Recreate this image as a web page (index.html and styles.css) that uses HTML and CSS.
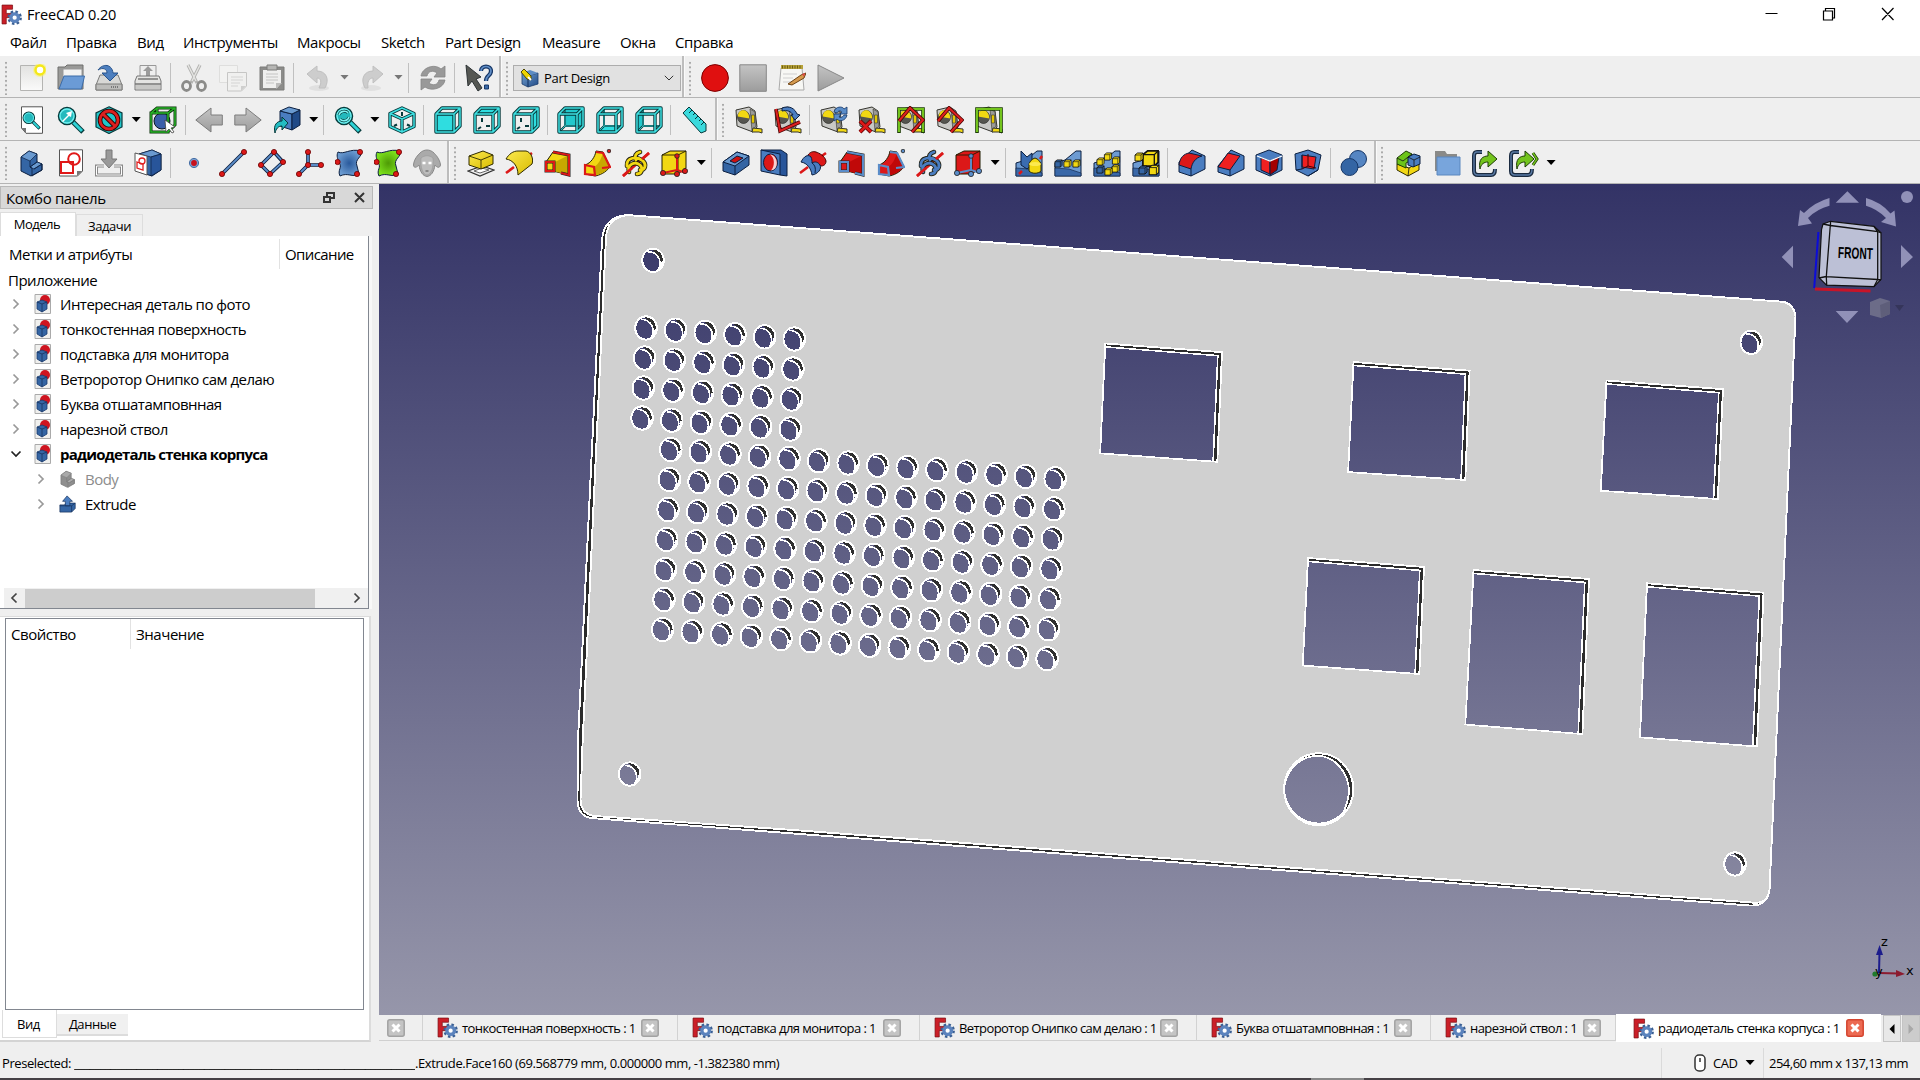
FILE: index.html
```html
<!DOCTYPE html>
<html lang="ru">
<head>
<meta charset="utf-8">
<title>FreeCAD 0.20</title>
<link rel="stylesheet" href="styles.css">
</head>
<body>
<svg class="defs" aria-hidden="true">
<defs>
<linearGradient id="gBlue" x1="0" y1="0" x2="1" y2="1"><stop offset="0" stop-color="#729fcf"/><stop offset="1" stop-color="#204a87"/></linearGradient>
<linearGradient id="gGrey" x1="0" y1="0" x2="0" y2="1"><stop offset="0" stop-color="#c4c4c4"/><stop offset="1" stop-color="#9c9c9c"/></linearGradient>
<linearGradient id="gPaper" x1="0" y1="0" x2="0" y2="1"><stop offset="0" stop-color="#e2e2e0"/><stop offset="1" stop-color="#fafafa"/></linearGradient>
<linearGradient id="gYel" x1="0" y1="0" x2="1" y2="1"><stop offset="0" stop-color="#fce94f"/><stop offset="1" stop-color="#d8bc00"/></linearGradient>
<radialGradient id="gSpot"><stop offset="0" stop-color="#2a5a9c"/><stop offset="1" stop-color="#6a9ad0"/></radialGradient>
<radialGradient id="gSpotG"><stop offset="0" stop-color="#4e9a06"/><stop offset="1" stop-color="#7be01c"/></radialGradient>

<symbol id="logo" viewBox="0 0 20 20"><path d="M1 1h10v4H5v4h5v4H5v6H1z" fill="#cb1f28" stroke="#7a1016" stroke-width=".7"/><circle cx="13" cy="13" r="5.600" fill="none" stroke="#3a5f93" stroke-width="2.600" stroke-dasharray="2.300 2.100"/><circle cx="13" cy="13" r="3.600" fill="#fff" stroke="#5b83bd" stroke-width="3.200"/></symbol>
<symbol id="new" viewBox="0 0 28 28"><path d="M2.500 1.500h22v25h-22z" fill="url(#gPaper)" stroke="#b4b4b2"/><circle cx="22" cy="6" r="7" fill="#fbf26a" opacity=".55"/><circle cx="22" cy="6" r="4.500" fill="#fff" stroke="#f4e81a" stroke-width="2.500"/></symbol>
<symbol id="open" viewBox="0 0 28 28"><path d="M1 25V3h7l2-2h16v24z" fill="#9a9a98" stroke="#6e6e6c"/><path d="M6 14V5h19v9z" fill="#f3f3f2" stroke="#999"/><path d="M2 25 7 12h20.500l-3 13z" fill="#6b9bd6" stroke="#3d6ca8"/></symbol>
<symbol id="save" viewBox="0 0 28 28"><path d="M5 11h18l4 10v5H1v-5z" fill="#d8d8d6" stroke="#7c7c7a"/><path d="M1 20h26v6H1z" fill="#bcbcba" stroke="#7c7c7a"/><path d="M16 23h8" stroke="#777" stroke-dasharray="1 1" stroke-width="2"/><path d="M3 6C8-1 17 0 18 9h5l-8 8-8-8h5c0-4-4-6-9-3z" fill="#4d7fbf" stroke="#27538c"/></symbol>
<symbol id="print" viewBox="0 0 28 28"><path d="M6 1.500h16V14H6z" fill="#eee" stroke="#999"/><path d="m14 2-5 5h3v5h4V7h3z" fill="#9b9b9b"/><path d="M3 12h22l2 5v9H1v-9z" fill="#e4e4e2" stroke="#777"/><path d="M4 15h20M1 20h26" stroke="#777" stroke-width="1.500"/><path d="M2 21h24v4H2z" fill="#c8c8c6"/></symbol>
<symbol id="cut" viewBox="0 0 28 28"><path d="m8 1 9 18M20 1l-9 18" stroke="#b2b2b0" stroke-width="3.200"/><path d="m8 1 8 16M20 1l-8 16" stroke="#e4e4e2" stroke-width="1.400"/><ellipse cx="6.500" cy="22" rx="4" ry="4.500" fill="none" stroke="#8b8b89" stroke-width="2.800"/><ellipse cx="21.500" cy="22" rx="4" ry="4.500" fill="none" stroke="#8b8b89" stroke-width="2.800"/></symbol>
<symbol id="copy" viewBox="0 0 28 28"><path d="M.5 1.500h18v17H.5z" fill="#f2f2f1" stroke="#dededd"/><path d="M8.500 8.500h19V22l-5 5h-14z" fill="#f0f0ef" stroke="#c6c6c5"/><path d="M12 13h12M12 16h12M12 19h9M12 22h7" stroke="#d4d4d3"/><path d="M22 27v-5h5z" fill="#cfcfce"/></symbol>
<symbol id="paste" viewBox="0 0 28 28"><path d="M2 3h24v23H2z" fill="#8c8c8a" stroke="#7d7d7b"/><path d="M5 6h18v13l-4 5H5z" fill="#efefee"/><path d="M9 1h10v5H9z" fill="#b6b6b4" stroke="#7d7d7b"/><path d="M8 10h12M8 13h12M8 16h12M8 19h8" stroke="#c4c4c3"/><path d="M18 25v-6h6z" fill="#bdbdbc"/></symbol>
<symbol id="undo" viewBox="0 0 28 28"><ellipse cx="15" cy="24" rx="10" ry="3" fill="#e0e0e0"/><path d="M3 10 13 2v5c9 0 13 8 8 17h-6c3-6 2-10-2-10v5z" fill="#cdcdcd" stroke="#c0c0c0"/></symbol>
<symbol id="redo" viewBox="0 0 28 28"><ellipse cx="13" cy="24" rx="10" ry="3" fill="#e0e0e0"/><path d="M25 10 15 2v5C6 7 2 15 7 24h3c-1-6 1-10 5-10v5z" fill="#cdcdcd" stroke="#c0c0c0"/></symbol>
<symbol id="refresh" viewBox="0 0 28 28"><path d="M2 12C3 4 15-1 22 5l4-3v11H15l3-4C14 6 9 7 8 12zM26 16c-1 8-13 12-20 7l-4 3V15h11l-3 4c4 3 9 2 10-3z" fill="#999" stroke="#868686" stroke-width=".8"/></symbol>
<symbol id="whats" viewBox="0 0 28 28"><path d="m1 1 15 12-5 2 6 9-4 3-6-10-4 5z" fill="#555753" stroke="#2e3436"/><path d="M16 7c0-6 10-6 10 0 0 5-5 4-5 10" fill="none" stroke="#173767" stroke-width="4.200"/><path d="M16 7c0-6 10-6 10 0 0 5-5 4-5 10" fill="none" stroke="#5f8dc6" stroke-width="1.700"/><path d="M19.500 21h4v4h-4z" fill="#3b6aa8" stroke="#173767"/></symbol>
<symbol id="wb" viewBox="0 0 20 20"><path d="m3 5 6 3v11l-6-3zM9 8l10-3v11L9 19z" fill="url(#gBlue)" stroke="#1c3c6c" stroke-width=".8"/><path d="m3 5 8-3 8 3-10 3z" fill="#5d8cc4"/><path d="m2 4 3-3 7 7v4l-4-1z" fill="#edd400" stroke="#504700"/><path d="m9 9 3 3" stroke="#fff" stroke-width="2"/></symbol>
<symbol id="rec" viewBox="0 0 28 28"><circle cx="14" cy="14" r="13.400" fill="#e01010" stroke="#7c0000"/></symbol>
<symbol id="stop" viewBox="0 0 28 28"><path d="M.8.8h26.500v26.500H.8z" fill="url(#gGrey)" stroke="#888"/></symbol>
<symbol id="macro" viewBox="0 0 28 28"><path d="M3 4h21l2 22H1z" fill="#f7f7f4" stroke="#aaa"/><path d="M3 1h22v4H3z" fill="#b7a23a"/><path d="M4 3h20" stroke="#6b5c12" stroke-width="3" stroke-dasharray="1 1.500"/><path d="M5 10h14M5 14h10M5 18h8" stroke="#cfcfcf"/><path d="m10 20 13-9 5-2-2 5-12 7z" fill="#d59a4e" stroke="#6d4213"/><path d="m24 10 3-1-1 4z" fill="#d44"/></symbol>
<symbol id="play" viewBox="0 0 28 28"><path d="M1 1v26l26-13z" fill="url(#gGrey)" stroke="#888"/></symbol>

<symbol id="lens" viewBox="0 0 28 28"><path d="m16 16 10 10" stroke="#063b3c" stroke-width="5"/><path d="m16 16 9 9" stroke="#2fd3d6" stroke-width="3"/><circle cx="10" cy="10" r="8.500" fill="#23b9bd" stroke="#063b3c" stroke-width="1.500"/><circle cx="10" cy="10" r="7" fill="none" stroke="#6ff0f0" stroke-width="1.300"/></symbol>
<symbol id="fitall" viewBox="0 0 28 28"><path d="M3.500.8h21v26.500H8L3.500 22z" fill="#fff" stroke="#555"/><path d="M3.500 22H8v5z" fill="#777"/><use href="#lens" x="4" y="5" width="19" height="19"/></symbol>
<symbol id="fitsel" viewBox="0 0 28 28"><use href="#lens"/><path d="m5 15 6-6-2-2 6-2-1 6-2-1-6 6z" fill="#fff"/></symbol>
<symbol id="noentry" viewBox="0 0 28 28"><path d="M14 .8 27 7v14l-13 6.500L1 21V7z" fill="#20c6ca" stroke="#07383a" stroke-width="1.200"/><circle cx="14" cy="14" r="9" fill="none" stroke="#2b0505" stroke-width="4.600"/><path d="m8 8 12 12" stroke="#2b0505" stroke-width="4.600"/><circle cx="14" cy="14" r="9" fill="none" stroke="#dc2020" stroke-width="2.800"/><path d="m8 8 12 12" stroke="#dc2020" stroke-width="2.800"/></symbol>
<symbol id="selbox" viewBox="0 0 28 28"><circle cx="13" cy="15" r="8" fill="#3a5ea8" stroke="#0b1521"/><g fill="none"><path d="M2 7h17v19H2zM2 7l6-5h18v17l-7 7M19 7l7-5M8 2v6" stroke="#0a300a" stroke-width="3"/><path d="M2 7h17v19H2zM2 7l6-5h18v17l-7 7M19 7l7-5M8 2v6" stroke="#28b428" stroke-width="1.500"/></g><path d="m16 14 10 7-4 1 3 4-2 1-3-4-3 3z" fill="#fff" stroke="#444" stroke-width=".8"/></symbol>
<symbol id="back" viewBox="0 0 28 28"><path d="M.8 14 16 2v7h11.300v10H16v7z" fill="url(#gGrey)" stroke="#7c7c7c"/></symbol>
<symbol id="fwd" viewBox="0 0 28 28"><path d="M27.200 14 12 2v7H.8v10H12v7z" fill="url(#gGrey)" stroke="#7c7c7c"/></symbol>
<symbol id="link" viewBox="0 0 28 28"><path d="m7 5 12 3v16L7 20z" fill="#4a7dc0" stroke="#0b1f40"/><path d="m19 8 8-4v15l-8 5z" fill="#204a87" stroke="#0b1f40"/><path d="m7 5 9-4 11 3-8 4z" fill="#6a9ad0" stroke="#0b1f40"/><path d="M2 27c-2-8 2-12 7-12v-4l6 6-6 7v-4c-4 0-6 3-7 7z" fill="#22bcc2" stroke="#06393b"/></symbol>
<symbol id="drawstyle" viewBox="0 0 28 28"><use href="#lens"/><path d="M5 9c1-4 7-5 9-2M15 11c-1 4-7 5-9 2" fill="none" stroke="#063b3c" stroke-width="3"/><path d="M5 9c1-4 7-5 9-2M15 11c-1 4-7 5-9 2" fill="none" stroke="#7df2f2" stroke-width="1.600"/></symbol>
<symbol id="iso" viewBox="0 0 28 28"><g fill="none" stroke-linejoin="round"><path d="M14 2 26 7.500v13L14 26 2 20.500v-13zM2 7.500 14 13l12-5.500M14 13v13" stroke="#06393b" stroke-width="3.400"/><path d="M14 2 26 7.500v13L14 26 2 20.500v-13zM2 7.500 14 13l12-5.500M14 13v13" stroke="#3fe0e2" stroke-width="1.500"/><path d="m6 20 3-1.500m13 1.500-3-1.500M14 6v4" stroke="#06393b" stroke-width="2"/></g></symbol>
<symbol id="wire" viewBox="0 0 28 28"><g fill="none" stroke-linejoin="round"><path d="M2 8h18v18H2zM2 8l6-6h18v18l-6 6M20 8l6-6" stroke="#06393b" stroke-width="3.400"/><path d="M2 8h18v18H2zM2 8l6-6h18v18l-6 6M20 8l6-6" stroke="#3fe0e2" stroke-width="1.500"/></g></symbol>
<symbol id="marks" viewBox="0 0 28 28"><path d="M9 12v4M13 20h4M5 23l3-2" stroke="#06393b" stroke-width="2"/></symbol>
<symbol id="inner" viewBox="0 0 28 28"><path d="M8 3v17h17M8 20l-5 5" fill="none" stroke="#06393b" stroke-width="2"/><path d="M8 3v17h17M8 20l-5 5" fill="none" stroke="#3fe0e2" stroke-width=".8"/></symbol>
<symbol id="vfront" viewBox="0 0 28 28"><path d="M2 8h18v18H2z" fill="#2fdde0"/><use href="#wire"/></symbol>
<symbol id="vtop" viewBox="0 0 28 28"><path d="m2 8 6-6h18l-6 6z" fill="#2fdde0"/><use href="#marks"/><use href="#wire"/></symbol>
<symbol id="vright" viewBox="0 0 28 28"><path d="m20 8 6-6v18l-6 6z" fill="#2fdde0"/><use href="#marks"/><use href="#wire"/></symbol>
<symbol id="vrear" viewBox="0 0 28 28"><path d="M8 2h18v18H8z" fill="#22c8cc"/><use href="#inner"/><use href="#wire"/></symbol>
<symbol id="vbottom" viewBox="0 0 28 28"><path d="m2 26 6-6h18l-6 6z" fill="#2fdde0"/><use href="#inner"/><use href="#wire"/></symbol>
<symbol id="vleft" viewBox="0 0 28 28"><path d="m2 8 6-6v18l-6 6z" fill="#22c8cc"/><use href="#inner"/><use href="#wire"/></symbol>
<symbol id="ruler" viewBox="0 0 28 28"><path d="m2 7 6-6 17 17v7l-5 2z" fill="#3ad9dc" stroke="#06393b"/><path d="m11 4-3 3m6 0-2 2m5 1-3 3m6 0-2 2m5 1-3 3" stroke="#06393b"/></symbol>
<symbol id="tape" viewBox="0 0 28 28"><path d="M1 4 14 1l6 4 2 16-4 5L2 20z" fill="#c9c9c6" stroke="#35352f"/><path d="M15 3 20 6l1 14-4 5z" fill="#9a9a96" stroke="#35352f" stroke-width=".6"/><ellipse cx="8.500" cy="11" rx="6" ry="6.500" fill="#55554f" stroke="#2a2a26" stroke-width=".7"/><path d="M2.800 10.500C3 2 14 2 14.300 12.500z" fill="#f2d813"/><path d="M16.500 9h3v8h-3z" fill="#e4c800" stroke="#35352f" stroke-width=".6"/><path d="m18 22 9 1v4l-3-1-7 0z" fill="#f2d813" stroke="#35352f"/></symbol>
<symbol id="tangle" viewBox="0 0 28 28"><use href="#tape"/><path d="M8 2c8-3 13 1 15 6l3 1-5 5-4-5h2C17 5 13 4 8 5z" fill="#4a7dc0" stroke="#0b1f40"/><path d="m2 3 4 22 20-9" fill="none" stroke="#470303" stroke-width="3.600"/><path d="m2 3 4 22 20-9" fill="none" stroke="#dc2020" stroke-width="2"/></symbol>
<symbol id="trefresh" viewBox="0 0 28 28"><use href="#tape"/><path d="M14 6c1-6 9-6 10-3l3-2v7h-7l2-2c-2-2-4-1-5 1zM27 9c-1 6-8 7-10 4l-3 2V8h7l-2 3c2 1 4 0 5-2z" fill="#5a8cc8" stroke="#173767" stroke-width=".8"/></symbol>
<symbol id="tclear" viewBox="0 0 28 28"><use href="#tape"/><path d="m2 15 11 11M13 15 2 26" stroke="#5a0000" stroke-width="4"/><path d="m2 15 11 11M13 15 2 26" stroke="#dc1818" stroke-width="2.500"/></symbol>
<symbol id="gframe" viewBox="0 0 28 28"><g fill="none"><path d="M2 27V3h24v24" stroke="#1d3d05" stroke-width="3.600"/><path d="M2 26V3h24v23" stroke="#73c41d" stroke-width="2"/></g></symbol>
<symbol id="rchev" viewBox="0 0 28 28"><g fill="none"><path d="M2 15 13 2l13 12-11 12" stroke="#470303" stroke-width="3.600"/><path d="M2 15 13 2l13 12-11 12" stroke="#dc2020" stroke-width="2"/></g></symbol>
<symbol id="tall" viewBox="0 0 28 28"><use href="#tape"/><use href="#gframe"/><use href="#rchev"/></symbol>
<symbol id="t3d" viewBox="0 0 28 28"><use href="#tape"/><use href="#rchev"/></symbol>
<symbol id="tdelta" viewBox="0 0 28 28"><use href="#tape"/><use href="#gframe"/></symbol>

<symbol id="body" viewBox="0 0 28 28"><path d="m3 8 8-6 8 3v8l5 2v6l-11 6-10-5z" fill="var(--a,#3465a4)" stroke="var(--k,#0b1f40)"/><path d="m3 8 9 4 7-7-8-3zM12 18l4 2 8-5-5-2z" fill="var(--b,#6a9ad0)" stroke="var(--k,#0b1f40)" stroke-width=".7"/><path d="M12 12v6l2 1v8l10-6v-6l-8 5M12 18l7-5" fill="none" stroke="var(--k,#0b1f40)" stroke-width=".8"/></symbol>
<symbol id="sketch" viewBox="0 0 28 28"><path d="M2.500.8h23V22l-5 5h-18z" fill="#fff" stroke="#555"/><path d="M20 27v-5h5.500z" fill="#777"/><path d="M4 13h12v11H4z" fill="none" stroke="#e01818" stroke-width="2"/><circle cx="17" cy="10" r="5.800" fill="none" stroke="#e01818" stroke-width="2"/></symbol>
<symbol id="mapsk" viewBox="0 0 28 28"><path d="M9 17H1.500v9h25v-9H19" fill="none" stroke="#888" stroke-width="3"/><path d="M9 17H1.500v9h25v-9H19" fill="none" stroke="#fff"/><path d="M11 1h6v9h5l-8 9-8-9h5z" fill="#999" stroke="#777"/></symbol>
<symbol id="valsk" viewBox="0 0 28 28"><path d="m5 5 13-4 9 4v16l-9 6-13-4z" fill="#3465a4" stroke="#0b1f40"/><path d="m5 5 12 3 10-3-9-4z" fill="#6a9ad0" stroke="#0b1f40" stroke-width=".7"/><path d="M17 8v19l10-6V5z" fill="#28559a" stroke="#0b1f40" stroke-width=".7"/><path d="m1 4 12 3v19L1 22z" fill="#fff" stroke="#555"/><circle cx="8" cy="12" r="3" fill="none" stroke="#e02020" stroke-width="1.300"/><path d="m3 13 6 2v6l-6-2z" fill="none" stroke="#e02020" stroke-width="1.300"/></symbol>
<symbol id="dpoint" viewBox="0 0 28 28"><circle cx="14" cy="14" r="4.600" fill="#7aa0d0" stroke="#466ea5"/><circle cx="14" cy="14" r="2.900" fill="#c8101c"/></symbol>
<symbol id="dline" viewBox="0 0 28 28"><path d="M3 25 25 3" stroke="#0b1f40" stroke-width="3.600"/><path d="M3 25 25 3" stroke="#5a8cc8" stroke-width="1.800"/><g fill="#dc1818" stroke="#6b0000" stroke-width=".8"><circle cx="3" cy="25" r="2.600"/><circle cx="25" cy="3" r="2.600"/></g></symbol>
<symbol id="dplane" viewBox="0 0 28 28"><path d="m16 3 9 10-13 12-9-9z" fill="none" stroke="#0b1f40" stroke-width="3.600"/><path d="m16 3 9 10-13 12-9-9z" fill="none" stroke="#5a8cc8" stroke-width="1.800"/><g fill="#dc1818" stroke="#6b0000" stroke-width=".8"><circle cx="16" cy="3" r="2.600"/><circle cx="25" cy="13" r="2.600"/><circle cx="12" cy="25" r="2.600"/><circle cx="3" cy="16" r="2.600"/></g></symbol>
<symbol id="dcs" viewBox="0 0 28 28"><path d="M12 3v13h13M12 16l-9 9" fill="none" stroke="#0b1f40" stroke-width="3.600"/><path d="M12 3v13h13M12 16l-9 9" fill="none" stroke="#5a8cc8" stroke-width="1.800"/><g fill="#dc1818" stroke="#6b0000" stroke-width=".8"><circle cx="12" cy="3" r="2.600"/><circle cx="12" cy="16" r="2.600"/><circle cx="25" cy="16" r="2.600"/><circle cx="3" cy="25" r="2.600"/></g></symbol>
<symbol id="blob" viewBox="0 0 28 28"><path d="M3 3c6 3 12-4 23-1 2 6-7 8-4 15l2 8c-7 4-11-2-19 2-3-6 3-9-1-13-1-4-3-7-1-11z" fill="var(--f)" stroke="#0b1f40"/><g fill="#dc1818" stroke="#6b0000" stroke-width=".8"><circle cx="25" cy="3" r="2.600"/><circle cx="2.600" cy="13" r="2.600"/><circle cx="22" cy="25" r="2.600"/></g></symbol>
<symbol id="clone" viewBox="0 0 28 28"><path d="M7 4c4-4 10-4 14 0 1 1 6 6 6.500 12-1 4-4 2-5.500 0-1 7-4 11-8 11.500C10 27 7 23 6 16c-2 2-5 4-5.500 0C1 10 5 6 7 4z" fill="#aaa" stroke="#888"/><path d="M8 9c-1 9 2 17 6 17s7-8 6-17c-4-3-8-3-12 0z" fill="#bcbcbc" stroke="#999" stroke-width=".6"/><path d="M9.500 14h3m3 0h3" stroke="#fff" stroke-width="2.500"/><path d="M12.500 22h3" stroke="#777" stroke-width="1.500"/></symbol>

<symbol id="pad" viewBox="0 0 28 28"><path d="m1 22 14-5 12 4-14 6z" fill="#eee" stroke="#333" stroke-width="1.300"/><path d="m7 22 8-3 7 2-9 3z" fill="#fff" stroke="#666"/><path d="M2 7v9l12 4 12-5V6l-10-4z" fill="url(#gYel)" stroke="#302b00"/><path d="m2 7 12 4 12-5M14 11v9" fill="none" stroke="#302b00" stroke-width=".9"/></symbol>
<symbol id="rev" viewBox="0 0 28 28"><path d="m1 24 8-6M20 9l7-5" stroke="#dc1818" stroke-width="2.600"/><path d="M1 10C4 5 8 2 13 2h8c5 1 8 8 6 13L13 26C13 17 8 11 1 10z" fill="url(#gYel)" stroke="#302b00"/></symbol>
<symbol id="loft" viewBox="0 0 28 28"><path d="M2 13 9 3l16 3v20L9 22H2z" fill="var(--f)" stroke="#201c00"/><path d="M9 14 25 6v20L9 22z" fill="var(--g)"/><path d="m9 3 16 3v20l-8-2M2 13h8v9H2z" fill="none" stroke="#222" stroke-width="3"/><path d="m9 3 16 3v20l-8-2M2 13h8v9H2z" fill="none" stroke="var(--e)" stroke-width="2"/></symbol>
<symbol id="pipe" viewBox="0 0 28 28"><path d="M2 16c6-2 10-8 11-14l7 1 7 15c-5 6-10 8-15 9L2 25z" fill="var(--f)" stroke="#201c00"/><path d="M11 18c5-3 7-8 9-14l7 14c-5 5-9 7-14 8z" fill="var(--g)"/><path d="m13 3 7 1 7 14-8 1M2 16l9 2 1 8-10-1z" fill="none" stroke="var(--e)" stroke-width="2.200"/><circle cx="26" cy="2" r="1.800" fill="var(--e)" stroke="#222" stroke-width=".8"/></symbol>
<symbol id="helix" viewBox="0 0 28 28"><path d="m1 27 26-23" stroke="#dc1818" stroke-width="2.600"/><g fill="none" stroke-linecap="round"><path d="M14 11C12 7 14 4 18 3M5 17C4 8 15 7 21 12c4 4 2 9-3 9M7 23C5 15 13 12 18 16c4 4 1 9-3 9" stroke="#222010" stroke-width="4.600"/><path d="M14 11C12 7 14 4 18 3M5 17C4 8 15 7 21 12c4 4 2 9-3 9M7 23C5 15 13 12 18 16c4 4 1 9-3 9" stroke="var(--f)" stroke-width="2.800"/></g><path d="m1 27 9-8M20 10l7-6" stroke="#dc1818" stroke-width="2.600"/></symbol>
<symbol id="prim" viewBox="0 0 28 28"><path d="m2 6 8-4h16v17l-8 6H2z" fill="var(--f)" stroke="#201c00"/><path d="M2 6h16l8-4M18 6v19" fill="none" stroke="#201c00" stroke-width=".9"/><path d="M17 7v14M17 21l9 3M17 21 3 24" stroke="var(--e)" stroke-width="2" fill="none"/><g fill="var(--e)" stroke="#222" stroke-width=".8"><circle cx="17" cy="7" r="2.300"/><circle cx="3" cy="24" r="2.600"/><circle cx="17" cy="25" r="2.600"/><circle cx="25" cy="22" r="2.600"/></g></symbol>
<symbol id="pocket" viewBox="0 0 28 28"><path d="m1 13 14-10 12 4v9L13 26 1 22z" fill="#3465a4" stroke="#0b1f40"/><path d="m1 13 14-10 12 4-14 10z" fill="#6a9ad0" stroke="#0b1f40"/><path d="m8 12 7-5 6 2-8 5z" fill="#cc1010" stroke="#0b1f40"/><path d="M13 17v9" stroke="#0b1f40"/></symbol>
<symbol id="hole" viewBox="0 0 28 28"><path d="M1 1h20l6 4v22l-7-1z" fill="#28559a" stroke="#0b1f40"/><path d="m1 1 19 4v21L1 22z" fill="#4a7dc0" stroke="#0b1f40"/><ellipse cx="10.500" cy="13.500" rx="7" ry="8.500" fill="#dc1818" stroke="#0b1f40"/><path d="M10 5.500c5 3 5 12 1 16 8 0 8-15-1-16z" fill="#fff" opacity=".8"/></symbol>
<symbol id="groove" viewBox="0 0 28 28"><path d="m1 24 8-6M20 9l7-5" stroke="#dc1818" stroke-width="2.600"/><path d="M9 6c2-3 5-4 8-3s9 4 10 9c0 4-3 5-5 5L12 14z" fill="#dc1818" stroke="#400"/><path d="M2 13c3-6 7-8 10-5 1 2 1 4 1 6 3-2 6-1 8 2 2 4-2 9-8 10-1-7-5-12-11-13z" fill="#4a7dc0" stroke="#0b1f40"/><path d="M13 14c3 2 4 5 3 10" fill="none" stroke="#0b1f40"/></symbol>
<symbol id="wedge" viewBox="0 0 28 28"><path d="M1 14 11 11 22 2h5v25H1z" fill="#6d9bd2" stroke="#0b1f40"/><path d="m1 19 14 1 12 4v3H1z" fill="#3a68a8" stroke="#0b1f40" stroke-width=".6"/></symbol>
<symbol id="cb" viewBox="0 0 10 10"><path d="m1 3 2.500-2H9v6L7 9H1z" fill="var(--f)" stroke="#111" stroke-width=".9"/><path d="M1 3h6l2-2M7 3v6" fill="none" stroke="#111" stroke-width=".7"/></symbol>
<symbol id="mirror" viewBox="0 0 28 28"><use href="#wedge"/><path d="m6 2 6 6 5-4v12l-5 4-6-4z" fill="#3a6cb0" stroke="#0b1f40"/><path d="M14 15c1-3 3-5 6-6 3 1 5 3 6 6v7c-3 3-9 3-12 0z" fill="#f2d813" stroke="#302b00"/><ellipse cx="20" cy="15" rx="6" ry="2" fill="#fce94f"/><path d="m4 25 3-3M25 10l2-3" stroke="#dc1818" stroke-width="2.500"/></symbol>
<symbol id="linpat" viewBox="0 0 28 28"><use href="#wedge"/><use href="#cb" class="b" x="0" y="10" width="9" height="9"/><use href="#cb" class="y" x="9" y="10" width="9" height="9"/><use href="#cb" class="y" x="18" y="10" width="9" height="9"/></symbol>
<symbol id="polpat" viewBox="0 0 28 28"><use href="#wedge"/><use href="#cb" class="y" x="10" y="3" width="10" height="9"/><use href="#cb" class="y" x="3" y="8" width="9" height="9"/><use href="#cb" class="y" x="18" y="7" width="10" height="9"/><use href="#cb" class="y" x="18" y="15" width="9" height="9"/><use href="#cb" class="b" x="3" y="16" width="9" height="9"/><use href="#cb" class="y" x="11" y="18" width="9" height="9"/></symbol>
<symbol id="multi" viewBox="0 0 28 28"><use href="#wedge"/><use href="#cb" class="y" x="9" y="0" width="19" height="19"/><use href="#cb" class="y" x="2" y="3" width="10" height="10"/><use href="#cb" class="y" x="16" y="15" width="12" height="12"/><use href="#cb" class="b" x="6" y="16" width="10" height="10"/></symbol>
<symbol id="fillet" viewBox="0 0 28 28"><path d="M1 13v10l12 4 14-7V7L14 1z" fill="#4a7dc0" stroke="#0b1f40"/><path d="M1 16C2 8 6 5 11 4l13 3c-7 2-10 7-11 13z" fill="#dc1818" stroke="#0b1f40"/><path d="M13 20v7" stroke="#0b1f40"/></symbol>
<symbol id="chamfer" viewBox="0 0 28 28"><path d="M1 17v6l12 4 14-7V7L14 1z" fill="#4a7dc0" stroke="#0b1f40"/><path d="M1 18 11 4l12 3-10 14z" fill="#ef2020" stroke="#0b1f40"/><path d="M13 21v6" stroke="#0b1f40"/></symbol>
<symbol id="draft" viewBox="0 0 28 28"><path d="M14 1 27 6v15l-12 6-14-6V6z" fill="#4a7dc0" stroke="#0b1f40"/><path d="m6 9 9 3v13l-9-4z" fill="#ef2020" stroke="#0b1f40"/><path d="m15 12 9-4-2 13-7 5z" fill="#a40000" stroke="#0b1f40"/><path d="m2 7 13 5 12-5" fill="none" stroke="#fff" stroke-width="1.200"/></symbol>
<symbol id="thick" viewBox="0 0 28 28"><path d="M1 5 14 1l13 5-3 15-10 6-12-6z" fill="#4a7dc0" stroke="#0b1f40"/><path d="m8 6 14 2-2 12-12-2z" fill="#ef2020" stroke="#0b1f40"/><path d="M14 5v12l8 2M14 17l-6 3" fill="none" stroke="#400"/><path d="M8 6v14l-6 1M24 21l-10 6" fill="none" stroke="#0b1f40"/></symbol>
<symbol id="bool" viewBox="0 0 28 28"><circle cx="18" cy="10" r="8.500" fill="#5585c2" stroke="#173767"/><circle cx="9.500" cy="18" r="8.500" fill="#3465a4" stroke="#173767"/></symbol>

<symbol id="part" viewBox="0 0 28 28"><path d="m3 15 12 4 10-6v8l-11 6-11-6z" fill="#f2d813" stroke="#302b00"/><path d="m3 9 9-7 6 3v6l-6 3v5l-9-4z" fill="#6cc41a" stroke="#1d3d05"/><path d="m14 8 6-3 6 2v8l-7 3-5-2z" fill="#4a7dc0" stroke="#0b1f40"/><path d="m3 9 6 3 9-7M14 8l6 3 6-3M20 11v7M15 19l-1 8" fill="none" stroke="#111" stroke-width=".8"/></symbol>
<symbol id="group" viewBox="0 0 28 28"><path d="M2 22V2h10l2 3h10v17z" fill="#8a8a88"/><path d="M4 8h23v18H4z" fill="#78a5dc" stroke="#5a87bf"/></symbol>
<symbol id="mklink" viewBox="0 0 28 28"><path d="M11 3H6Q3 3 3 7v15q0 4 4 4h13q4 0 4-6" fill="none" stroke="#1b2b40" stroke-width="4"/><path d="M11 3H6Q3 3 3 7v15q0 4 4 4h13q4 0 4-6" fill="none" stroke="#5a7ba5" stroke-width="1.400"/><path d="M9 20C7 10 12 7 17 7V2l9 8-9 8v-5c-4 0-7 2-8 7z" fill="#73c41d" stroke="#1d3d05"/></symbol>
<symbol id="mkrel" viewBox="0 0 30 28"><use href="#mklink" width="28" height="28" x="-1"/><path d="m24 4 4 6-4 6" fill="none" stroke="#1d3d05" stroke-width="3"/><path d="m24 4 4 6-4 6" fill="none" stroke="#73c41d" stroke-width="1.400"/></symbol>
<symbol id="doc" viewBox="0 0 18 20"><path d="M1 .5h15.500v19H1z" fill="#f0f0ee" stroke="#aaa"/><circle cx="11" cy="6" r="5" fill="#cf1420"/><path d="m3 8 5-2 5 2v7l-5 3-5-3z" fill="#3465a4" stroke="#1a3a6c" stroke-width=".8"/><path d="m3 8 5 2 5-2M8 10v8" fill="none" stroke="#16325e" stroke-width=".8"/></symbol>
<symbol id="extrude" viewBox="0 0 20 20"><path d="M1 11h5l2-2h10v6l-4 4H1z" fill="#3465a4" stroke="#16325e" stroke-width=".8"/><path d="m9 1 6 6h-3v5H7V7H4z" fill="#4a7dc0" stroke="#16325e" stroke-width=".8"/><path d="M1 12h13l4-3M14 12v7" fill="none" stroke="#16325e" stroke-width=".8"/></symbol>
<symbol id="x" viewBox="0 0 18 18"><rect x=".8" y=".8" width="16.400" height="16.400" rx="2" fill="var(--a)" stroke="var(--k)" stroke-width="1.500"/><path d="m5.500 5.500 7 7m0-7-7 7" stroke="#fff" stroke-width="3"/></symbol>
<symbol id="chev" viewBox="0 0 8 12"><path d="m1.500 1.500 4.500 4.500-4.500 4.500" fill="none" stroke="currentColor" stroke-width="1.700"/></symbol>
</defs>
</svg>

<div class="app">
<header class="titlebar"><svg class="logo"><use href="#logo"/></svg><span class="apptitle">FreeCAD 0.20</span>
<svg class="winbtns" viewBox="0 0 130 28" fill="none" stroke="#000" stroke-width="1.200"><path d="M.5 13.500h12M58.500 11h9v9h-9zM60.500 11V8.500h9v9.500h-2M117 8l11.500 12M128.500 8 117 20"/></svg></header>
<nav class="menubar"><span>Файл</span><span>Правка</span><span>Вид</span><span>Инструменты</span><span>Макросы</span><span>Sketch</span><span>Part Design</span><span>Measure</span><span>Окна</span><span>Справка</span></nav>

<div class="toolrow">
<div class="toolbar"><i class="grip"></i><svg class="ic"><use href="#new"/></svg><svg class="ic"><use href="#open"/></svg><svg class="ic"><use href="#save"/></svg><svg class="ic"><use href="#print"/></svg><i class="sep"></i><svg class="ic"><use href="#cut"/></svg><svg class="ic wide"><use href="#copy"/></svg><svg class="ic"><use href="#paste"/></svg><i class="sep"></i><svg class="ic"><use href="#undo"/></svg><i class="arr dim"></i><svg class="ic"><use href="#redo"/></svg><i class="arr dim"></i><i class="sep"></i><svg class="ic"><use href="#refresh"/></svg><i class="sep"></i><svg class="ic"><use href="#whats"/></svg></div>
<div class="toolbar"><i class="grip"></i><div class="combo"><svg><use href="#wb"/></svg><span>Part Design</span><svg class="down" viewBox="0 0 10 6"><path d="m.8.8 4.200 4.200L9.200.8" fill="none" stroke="#333"/></svg></div></div>
<div class="toolbar last tight"><i class="grip"></i><svg class="ic"><use href="#rec"/></svg><svg class="ic"><use href="#stop"/></svg><svg class="ic"><use href="#macro"/></svg><svg class="ic"><use href="#play"/></svg></div>
</div>
<div class="toolrow">
<div class="toolbar"><i class="grip"></i><svg class="ic"><use href="#fitall"/></svg><svg class="ic"><use href="#fitsel"/></svg><svg class="ic"><use href="#noentry"/></svg><i class="arr"></i><svg class="ic"><use href="#selbox"/></svg><i class="sep"></i><svg class="ic"><use href="#back"/></svg><svg class="ic"><use href="#fwd"/></svg><svg class="ic"><use href="#link"/></svg><i class="arr"></i><i class="sep"></i><svg class="ic"><use href="#drawstyle"/></svg><i class="arr"></i><svg class="ic"><use href="#iso"/></svg><i class="sep"></i><svg class="ic"><use href="#vfront"/></svg><svg class="ic"><use href="#vtop"/></svg><svg class="ic"><use href="#vright"/></svg><i class="sep"></i><svg class="ic"><use href="#vrear"/></svg><svg class="ic"><use href="#vbottom"/></svg><svg class="ic"><use href="#vleft"/></svg><i class="sep"></i><svg class="ic"><use href="#ruler"/></svg></div>
<div class="toolbar last"><i class="grip"></i><svg class="ic"><use href="#tape"/></svg><svg class="ic"><use href="#tangle"/></svg><i class="sep"></i><svg class="ic"><use href="#trefresh"/></svg><svg class="ic"><use href="#tclear"/></svg><svg class="ic"><use href="#tall"/></svg><svg class="ic"><use href="#t3d"/></svg><svg class="ic"><use href="#tdelta"/></svg></div>
</div>
<div class="toolrow">
<div class="toolbar"><i class="grip"></i><svg class="ic"><use href="#body"/></svg><svg class="ic"><use href="#sketch"/></svg><svg class="ic"><use href="#mapsk"/></svg><svg class="ic"><use href="#valsk"/></svg><i class="sep"></i><svg class="ic"><use href="#dpoint"/></svg><svg class="ic"><use href="#dline"/></svg><svg class="ic"><use href="#dplane"/></svg><svg class="ic"><use href="#dcs"/></svg><svg class="ic spot"><use href="#blob"/></svg><svg class="ic spotg"><use href="#blob"/></svg><svg class="ic"><use href="#clone"/></svg></div>
<div class="toolbar"><i class="grip"></i><svg class="ic"><use href="#pad"/></svg><svg class="ic"><use href="#rev"/></svg><svg class="ic add"><use href="#loft"/></svg><svg class="ic add"><use href="#pipe"/></svg><svg class="ic add"><use href="#helix"/></svg><svg class="ic add"><use href="#prim"/></svg><i class="arr"></i><i class="sep"></i><svg class="ic"><use href="#pocket"/></svg><svg class="ic"><use href="#hole"/></svg><svg class="ic"><use href="#groove"/></svg><svg class="ic sub"><use href="#loft"/></svg><svg class="ic sub"><use href="#pipe"/></svg><svg class="ic blue"><use href="#helix"/></svg><svg class="ic sub"><use href="#prim"/></svg><i class="arr"></i><i class="sep"></i><svg class="ic"><use href="#mirror"/></svg><svg class="ic"><use href="#linpat"/></svg><svg class="ic"><use href="#polpat"/></svg><svg class="ic"><use href="#multi"/></svg><i class="sep"></i><svg class="ic"><use href="#fillet"/></svg><svg class="ic"><use href="#chamfer"/></svg><svg class="ic"><use href="#draft"/></svg><svg class="ic"><use href="#thick"/></svg><i class="sep"></i><svg class="ic"><use href="#bool"/></svg></div>
<div class="toolbar last"><i class="grip"></i><svg class="ic"><use href="#part"/></svg><svg class="ic"><use href="#group"/></svg><svg class="ic"><use href="#mklink"/></svg><svg class="ic wide"><use href="#mkrel"/></svg><i class="arr"></i></div>
</div>

<main class="work">
<aside class="side">
<div class="docktitle"><span>Комбо панель</span><svg viewBox="0 0 44 16" fill="none" stroke="#333" stroke-width="2"><path d="M2 7h6v5H2zM5 6V3h7v5H9M33 3l9 9M42 3l-9 9"/></svg></div>
<div class="tabs"><span class="tab on">Модель</span><span class="tab">Задачи</span></div>
<section class="model">
<div class="treehead"><span>Метки и атрибуты</span><span>Описание</span></div>
<div class="rootrow">Приложение</div>
<ul class="tree">
<li><svg class="tw"><use href="#chev"/></svg><svg class="ti"><use href="#doc"/></svg>Интересная деталь по фото</li>
<li><svg class="tw"><use href="#chev"/></svg><svg class="ti"><use href="#doc"/></svg>тонкостенная поверхность</li>
<li><svg class="tw"><use href="#chev"/></svg><svg class="ti"><use href="#doc"/></svg>подставка для монитора</li>
<li><svg class="tw"><use href="#chev"/></svg><svg class="ti"><use href="#doc"/></svg>Ветроротор Онипко сам делаю</li>
<li><svg class="tw"><use href="#chev"/></svg><svg class="ti"><use href="#doc"/></svg>Буква отшатамповнная</li>
<li><svg class="tw"><use href="#chev"/></svg><svg class="ti"><use href="#doc"/></svg>нарезной ствол</li>
<li class="active"><svg class="tw open"><use href="#chev"/></svg><svg class="ti"><use href="#doc"/></svg><span>радиодеталь стенка корпуса</span></li>
<li class="child off"><svg class="tw"><use href="#chev"/></svg><svg class="ti"><use href="#body"/></svg>Body</li>
<li class="child"><svg class="tw"><use href="#chev"/></svg><svg class="ti"><use href="#extrude"/></svg>Extrude</li>
</ul>
<div class="hscroll"><svg class="sa left"><use href="#chev"/></svg><div class="thumb"></div><svg class="sa"><use href="#chev"/></svg></div>
</section>
<section class="propwrap"><div class="props"><div class="prophead"><span>Свойство</span><span>Значение</span></div></div>
<div class="tabs bottom"><span class="tab on">Вид</span><span class="tab">Данные</span></div></section>
</aside>

<div class="center">
<svg class="view" viewBox="379 184 1541 831">
<defs>
<linearGradient id="sky" gradientUnits="userSpaceOnUse" x1="0" y1="184" x2="0" y2="1015"><stop offset="0" stop-color="#333366"/><stop offset="1" stop-color="#9696aa"/></linearGradient>
<g id="rim"><path d="M-1-10.500C6-12 10.500-6 10.500 1q0 3-1.500 5C8 0 5-6-1-10.500z" fill="#2f2f2f"/><path d="M-5-8.500C3-8.500 7-3 7 3q0 4-2 7" fill="none" stroke="#fff" stroke-width="1.600"/><path d="M7.500 8 9.500 1" stroke="#fff" stroke-width="1.500"/><ellipse rx="10.800" ry="11.700" fill="none" stroke="#fff" stroke-width="1.900"/></g>
</defs>
<rect x="379" y="184" width="1541" height="831" fill="url(#sky)"/>
<g class="plate">
<path d="M627 215C612 216 603 225 602 240L578 740 577.500 800C578 811 583 817 591 818L800 834 1750 905.500C1762 906 1768 901 1769.500 890L1795.500 316C1794 307 1789 302.500 1782 301.700z" fill="#2c2c2c" stroke="#fff" stroke-width="1.900"/>
<path d="M627 215C614 217 607 225 606 237L582.700 740 580.500 800C581 810 586 815 595 816L800 830.500 1752 902.500C1762 904 1768 900 1769.500 890L1795.500 316C1794 307 1789 302.500 1782 301.700z" fill="#d0d0d0" stroke="#fff" stroke-width="1.900"/>
<g id="windows"></g><g id="holes"></g>
<ellipse cx="1318.700" cy="789.200" rx="34.600" ry="36" fill="#2f2f2f"/>
<path d="M1284 789A34 36 0 0 1 1314 756C1334 754 1349 772 1349 792Q1348 803 1343 813A34.600 36 0 0 1 1284 789z" fill="url(#sky)" stroke="#fff" stroke-width="1.800"/>
<ellipse cx="1318.700" cy="789.200" rx="34.600" ry="36" fill="none" stroke="#fff" stroke-width="2"/>
</g>
<g fill="#9191b8"><path d="M1835.700 202.700h23.300l-11.600-11.400zM1781.700 257l11.300-11.300v22.600zM1901 245v23l12-11zM1835.700 311h22.600l-11.300 12z"/><circle cx="1907" cy="197" r="6"/><path d="M1829.500 198v7.800Q1817 209 1808 218l4 5.500-14 2.500 2-16 4 3Q1815 202 1829.500 198z"/><path d="M1866 198v7.800Q1877 209 1886 218l-5 4 15 4.500-1.500-16-4 3Q1881 202 1866 198z"/></g>
<path d="m1823 224 7.500-2.700 43.500 5 7 6.500v46.500l-7 7.300-47.500-1.500-7.500-7.500 2.500-48z" fill="#bcc0d6" stroke="#111" stroke-width="1.200"/>
<path d="m1830.300 225.500 47.400 6v48l-51.400-2.800zM1823 224l7.300 1.500M1877.700 231.500l3.300 1.500M1819 278l7.300-1.500M1877.700 279.500l3.300.5M1830.500 221v4.500M1874 226.500l3.700 5M1826.300 276.700l.4 8.600M1877.700 279.500l-3.700 7" fill="none" stroke="#111" stroke-width="1.300"/>
<text class="cubetext" x="1838" y="258.500" textLength="35" lengthAdjust="spacingAndGlyphs" transform="rotate(2 1855 253)">FRONT</text>
<path d="m1818.400 232-4.200 56" stroke="#0c0cd8" stroke-width="2"/><path d="m1815 289 55.500 2" stroke="#c81428" stroke-width="2.800"/>
<g opacity=".8"><path d="m1870 302 10-4 10 3v13l-9 4-11-3z" fill="#77778f"/><path d="m1880 305 10-4v13l-9 4z" fill="#66667d"/><path d="M1895 305h9l-4.500 6z" fill="#333355"/></g>
<path d="m1879 973 .5-20" stroke="#1c1c8c" stroke-width="2"/><path d="m1876 955 3.600-10 3.400 10z" fill="#1c1c8c"/><path d="m1880 973 18 .5" stroke="#8c1c30" stroke-width="2"/><path d="m1896 970 9 4-9 3z" fill="#8c1c30"/><circle cx="1875" cy="974" r="2.600" fill="#1f7a2c"/>
<text class="axis" x="1881" y="946">z</text><text class="axis" x="1906" y="975">x</text><text class="axis" x="1875" y="976">y</text>
</svg>
<div class="doctabs">
<span class="dt cut"><svg class="cl"><use href="#x"/></svg></span>
<span class="dt" style="width:255px"><svg class="dl"><use href="#logo"/></svg><b>тонкостенная поверхность : 1</b><svg class="cl"><use href="#x"/></svg></span>
<span class="dt" style="width:242px"><svg class="dl"><use href="#logo"/></svg><b>подставка для монитора : 1</b><svg class="cl"><use href="#x"/></svg></span>
<span class="dt" style="width:277px"><svg class="dl"><use href="#logo"/></svg><b>Ветроротор Онипко сам делаю : 1</b><svg class="cl"><use href="#x"/></svg></span>
<span class="dt" style="width:234px"><svg class="dl"><use href="#logo"/></svg><b>Буква отшатамповнная : 1</b><svg class="cl"><use href="#x"/></svg></span>
<span class="dt beside" style="width:185px"><svg class="dl"><use href="#logo"/></svg><b>нарезной ствол : 1</b><svg class="cl"><use href="#x"/></svg></span>
<span class="dt on" style="width:265px"><svg class="dl"><use href="#logo"/></svg><b>радиодеталь стенка корпуса : 1</b><svg class="cl"><use href="#x"/></svg></span>
<span class="nav"><svg viewBox="0 0 6 10"><path d="M5.500 0v10L.5 5z"/></svg></span><span class="nav dis"><svg viewBox="0 0 6 10"><path d="M.5 0v10l5-5z"/></svg></span>
</div>
</div>
</main>
<footer class="status"><span class="msg">Preselected:</span><span class="blank">________________________________________________________________________</span><span class="msg2">.Extrude.Face160 (69.568779 mm, 0.000000 mm, -1.382380 mm)</span>
<span class="cad"><svg class="mouse" viewBox="0 0 12 18"><rect x="1" y="1" width="10" height="16" rx="4" fill="#fff" stroke="#333" stroke-width="1.500"/><path d="M6 4v4" stroke="#333" stroke-width="1.500"/></svg><span>CAD</span><i class="arr"></i></span><span class="dims">254,60 mm x 137,13 mm</span></footer>
<div class="edge"></div>
</div>
<script src="plate.js"></script>
</body>
</html>
```
FILE: plate.js
```js
const NS = 'http://www.w3.org/2000/svg';
function add(parent, name, attrs) {
  const el = document.createElementNS(NS, name);
  for (const k in attrs) el.setAttribute(k, attrs[k]);
  parent.appendChild(el);
}

const holes = document.getElementById('holes');
function hole(x, y) {
  add(holes, 'ellipse', { cx: x, cy: y, rx: 10.7, ry: 11.6, fill: 'url(#sky)' });
  add(holes, 'use', { href: '#rim', x, y });
}
function grid(x, y, cols, rows, cx, cy, rx, ry) {
  for (let r = 0; r < rows; r++)
    for (let c = 0; c < cols; c++) hole(x + c * cx + r * rx, y + c * cy + r * ry);
}
grid(646, 328, 6, 4, 29.65, 2.2, -1.3, 30);
grid(670.8, 449.5, 14, 7, 29.57, 2.25, -1.35, 30);
[[653, 260.3], [1751.3, 342.3], [629.7, 774], [1735, 864]].forEach(p => hole(...p));

// Corners of each cut-out: top left, top right, bottom right, bottom left
const cutouts = [
  [1105.3, 343.5, 1222, 352.2, 1217.3, 461.8, 1100.2, 453.3],
  [1353.5, 362, 1469.6, 370.7, 1465.3, 480, 1348.2, 472],
  [1606.5, 380.5, 1723, 389.2, 1717.8, 499, 1600.8, 490.7],
  [1308, 558, 1424, 567, 1419.3, 674, 1302.8, 665.5],
  [1473.5, 570, 1589, 579, 1582.4, 734, 1465.4, 724.5],
  [1647, 583.3, 1763.5, 592.7, 1757, 746.5, 1640, 737.3]
];
const windows = document.getElementById('windows');
for (const [ax, ay, bx, by, cx, cy, dx, dy] of cutouts) {
  add(windows, 'path', { d: `M${ax} ${ay}L${bx} ${by} ${cx} ${cy} ${dx} ${dy}z`, fill: '#2c2c2c', stroke: '#fff', 'stroke-width': 1.8 });
  add(windows, 'path', { d: `M${ax} ${ay + 3.4}L${bx - 4.2} ${by + 3.4} ${cx - 4.2} ${cy - 0.3} ${dx} ${dy}z`, fill: 'url(#sky)', stroke: '#fff', 'stroke-width': 1.6 });
}
```
FILE: styles.css
```css
* { box-sizing: border-box; }
body { margin: 0; background: #efefef; color: #000; font: 15px "Open Sans", "Noto Sans", sans-serif; letter-spacing: -0.4px; overflow: hidden; }
.defs { position: absolute; width: 0; height: 0; }
.app { width: 1920px; height: 1080px; display: flex; flex-direction: column; }
svg { display: block; flex: none; }

.titlebar { height: 28px; background: #fff; display: flex; align-items: center; padding-left: 1px; }
.logo { width: 21px; height: 21px; }
.apptitle { margin-left: 5px; font-size: 14.5px; letter-spacing: -0.15px; }
.winbtns { width: 130px; height: 28px; margin: 0 25px 0 auto; }
.menubar { height: 28px; background: #fff; display: grid; grid-template-columns: 56px 71px 46px 114px 84px 64px 97px 78px 55px auto; padding-left: 10px; line-height: 29px; }

.toolrow { height: 43px; display: flex; border-bottom: 1px solid #b4b4b4; }
.toolrow:first-of-type { height: 42px; }
.toolbar { display: flex; align-items: center; padding: 2px 1px 0 0; border-right: 2px solid #bdbdbd; box-shadow: 1px 0 #fafafa; }
.toolbar.last { border-right: 0; box-shadow: none; }
.grip { width: 7.400px; margin-left: 5px; height: 34px; background: radial-gradient(circle at 1px 2px, #aaa 1px, transparent 1.300px) 0 0 / 20px 4.500px repeat-y; }
.toolbar + .toolbar .grip { margin-left: 4.500px; width: 7.500px; }
.toolbar.tight .grip { margin-left: 5px; width: 6px; }
.ic { width: 28px; height: 28px; margin: 0 5.400px; }
.ic.wide { width: 30px; margin: 0 4.400px; }
.sep { width: 7.200px; height: 30px; border-left: 1px solid #c0c0c0; transform: translateX(2px); }
.arr { width: 15.200px; height: 6px; background: #000; clip-path: polygon(3px 0, 12px 0, 7.500px 5px); }
.arr.dim { background: #777; }
.combo { width: 168px; height: 26px; border: 1px solid #adadad; background: #e1e1e1; display: flex; align-items: center; padding-left: 5px; font-size: 13px; letter-spacing: -0.35px; }
.combo svg { width: 20px; height: 20px; margin-right: 5px; }
.combo svg.down { width: 10px; height: 6px; margin: 0 6px 0 auto; }
.spot { --f: url(#gSpot); }
.spotg { --f: url(#gSpotG); }
.add { --f: #f2d813; --g: #c8a800; --e: #dc1818; }
.sub { --f: #dc1818; --g: #c00808; --e: #5a8cc8; }
.blue { --f: #4a7dc0; }
.b { --f: #3465a4; }
.y { --f: #f2d813; }

.work { flex: 1; min-height: 0; display: flex; }
.side { width: 379px; display: flex; flex-direction: column; }
.docktitle { width: 373px; height: 23px; margin-top: 2px; border: 1px solid #b8b8b8; background: #d8d8d8; display: flex; align-items: center; justify-content: space-between; padding: 0 7px 0 5px; letter-spacing: -0.35px; }
.docktitle svg { width: 44px; height: 16px; margin: 0 -1px 0 0; }
.tabs { display: flex; font-size: 13px; letter-spacing: -0.45px; }
.tab { display: flex; align-items: center; justify-content: center; }
.tabs:not(.bottom) { height: 27px; padding-top: 3px; align-items: flex-end; }
.tabs:not(.bottom) .tab { width: 67px; height: 22px; border: 1px solid #ddd; border-bottom: 0; }
.tabs:not(.bottom) .tab.on { width: 76px; height: 24px; padding: 0 2px 1px 0; background: #fff; }
.model { height: 373px; width: 369px; background: #fff; border-right: 1px solid #828790; border-bottom: 1px solid #828790; display: flex; flex-direction: column; box-shadow: 3px 0 #f8f8f8; }
.treehead { height: 34px; display: flex; align-items: center; padding: 2px 0 0 9px; letter-spacing: -0.6px; }
.treehead span:first-child { width: 271px; line-height: 30px; border-right: 1px solid #e2e2e2; }
.treehead span:last-child { padding-left: 5px; }
.rootrow { height: 21px; line-height: 20px; padding-left: 8px; letter-spacing: -0.5px; }
.tree { list-style: none; margin: 0; padding: 0; flex: 1; letter-spacing: -0.52px; }
.tree li { height: 25.070px; display: flex; align-items: center; padding-left: 12px; }
.tree li.child { padding-left: 37px; }
.tw { width: 8px; height: 12px; margin-right: 14px; color: #999; }
.tw.open { transform: rotate(90deg); color: #222; }
.ti { width: 18px; height: 20px; margin-right: 8px; }
.tree .active { font-weight: 700; letter-spacing: -0.78px; }
.off { color: #8c8c8c; --a: #8f8f8f; --b: #aaa; --k: #777; }
.hscroll { height: 20px; margin-left: 4px; background: #f0f0f0; display: flex; align-items: center; justify-content: space-between; padding: 0 7px 0 6px; color: #444; }
.sa { width: 8px; height: 12px; }
.sa.left { transform: scaleX(-1); }
.thumb { width: 290px; height: 19px; background: #cdcdcd; margin-right: 32px; }
.propwrap { width: 371px; margin-top: 7px; flex: 1; min-height: 0; max-height: 426px; border-right: 2px solid #dcdcdc; border-bottom: 2px solid #d4d4d4; border-top: 1px solid #dcdcdc; background: #fff; padding: 1px 0 0 5px; display: flex; flex-direction: column; }
.props { width: 359px; height: 392px; border: 1px solid #828790; background: #fff; }
.prophead { display: flex; line-height: 30px; padding-left: 5px; letter-spacing: -0.45px; }
.prophead span:first-child { width: 120px; border-right: 1px solid #e2e2e2; }
.prophead span:last-child { padding-left: 5px; }
.tabs.bottom { width: 366px; margin-left: -5px; }
.tabs.bottom .tab { width: 71px; height: 22px; margin-top: 4px; background: #f0f0f0; border-bottom: 2px solid #dcdcdc; }
.tabs.bottom .tab.on { width: 55px; height: 28px; margin: 0 0 0 2px; padding: 1px 2px 0 0; background: #fff; border: 1px solid #ddd; border-top: 0; }

.center { flex: 1; min-width: 0; display: flex; flex-direction: column; }
.view { width: 1541px; height: 831px; }
.plate { shape-rendering: crispEdges; }
.axis { font: 13px "DejaVu Sans", sans-serif; letter-spacing: 0; }
.cubetext { font: 700 16px "Liberation Sans", sans-serif; letter-spacing: 0; }
.doctabs { height: 28px; display: flex; font-size: 13px; letter-spacing: -0.57px; --a: #c4c4c4; --k: #a2a2a2; }
.dt { height: 26px; border-right: 1px solid #d2d2d2; border-bottom: 1px solid #d0d0d0; display: flex; align-items: center; padding: 0 18px 0 14px; }
.dt.cut { width: 44px; padding: 0 0 0 8px; }
.dt.beside { padding-right: 14px; }
.dt b { font-weight: 400; margin: 0 auto 0 4px; white-space: nowrap; }
.dt.on { height: 28px; background: #fff; border: 0; padding: 0 17px 0 17px; margin-top: -1px; --a: #ec6a52; --k: #d4442e; }
.dl { width: 21px; height: 21px; }
.cl { width: 18px; height: 18px; }
.nav { width: 18px; height: 27px; border: 1px solid #c4c4c4; background: #e8e8e8; margin-left: 2px; display: flex; align-items: center; justify-content: center; }
.nav svg { width: 6px; height: 10px; }
.nav.dis { background: #ccc; margin-left: 1px; fill: #a8a8a8; }
.status { height: 35px; display: flex; align-items: center; padding: 5px 0 0 2px; font-size: 13px; letter-spacing: -0.42px; white-space: nowrap; }
.msg { width: 72px; }
.blank { width: 341px; overflow: hidden; letter-spacing: -0.5px; }
.cad { margin-left: auto; width: 102px; height: 30px; border-left: 1px solid #dadada; display: flex; align-items: center; padding-left: 32px; }
.mouse { width: 12px; height: 18px; margin-right: 7px; }
.cad .arr { margin-left: 5px; }
.dims { width: 157px; height: 30px; line-height: 30px; border-left: 1px solid #dadada; padding-left: 5px; letter-spacing: -0.5px; }
.edge { height: 2px; background: linear-gradient(90deg, transparent 1311px, #888 1311px 1364px, transparent 1364px), #454045; }
```
